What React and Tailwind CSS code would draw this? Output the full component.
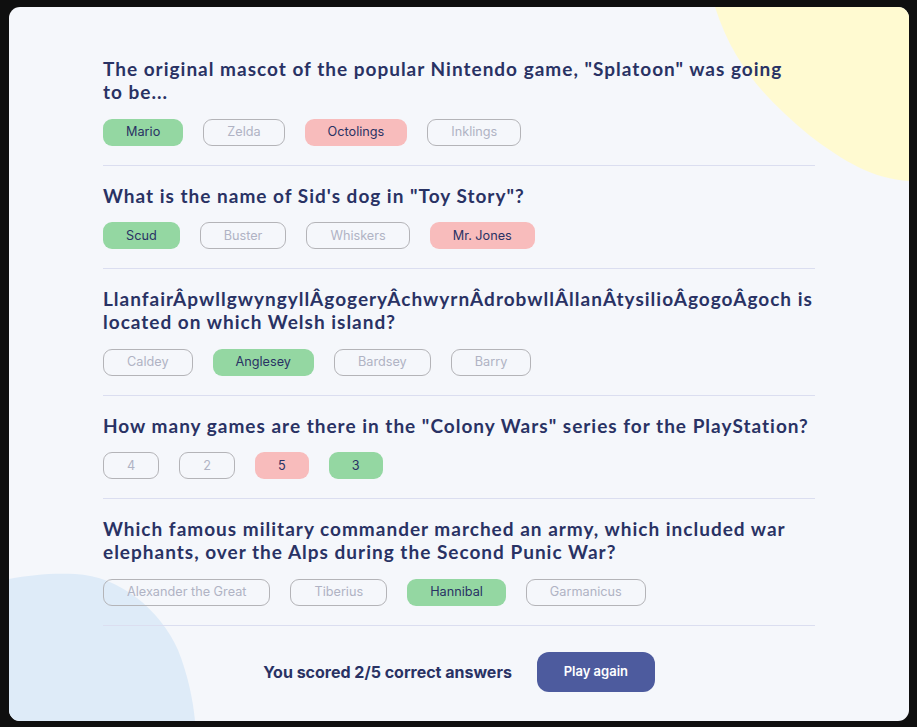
const questions = [
  {
    q: ['The original mascot of the popular Nintendo game, "Splatoon" was going', "to be..."],
    answers: [
      { text: "Mario", state: "correct" },
      { text: "Zelda" },
      { text: "Octolings", state: "wrong" },
      { text: "Inklings" },
    ],
  },
  {
    q: ['What is the name of Sid\'s dog in "Toy Story"?'],
    answers: [
      { text: "Scud", state: "correct" },
      { text: "Buster" },
      { text: "Whiskers" },
      { text: "Mr. Jones", state: "wrong" },
    ],
  },
  {
    q: ["LlanfairÂpwllgwyngyllÂgogeryÂchwyrnÂdrobwllÂllanÂtysilioÂgogoÂgoch is", "located on which Welsh island?"],
    answers: [
      { text: "Caldey" },
      { text: "Anglesey", state: "correct" },
      { text: "Bardsey" },
      { text: "Barry" },
    ],
  },
  {
    q: ['How many games are there in the "Colony Wars" series for the PlayStation?'],
    answers: [
      { text: "4" },
      { text: "2" },
      { text: "5", state: "wrong" },
      { text: "3", state: "correct" },
    ],
  },
  {
    q: [
      "Which famous military commander marched an army, which included war",
      "elephants, over the Alps during the Second Punic War?",
    ],
    answers: [
      { text: "Alexander the Great" },
      { text: "Tiberius" },
      { text: "Hannibal", state: "correct" },
      { text: "Garmanicus" },
    ],
  },
];

function Answer({ text, state }) {
  // picked/right answers are filled with no border, the rest are outlined
  const cls =
    state === "correct"
      ? "bg-[#94d7a2] text-[#293264]"
      : state === "wrong"
      ? "bg-[#f8bcbc] text-[#293264]"
      : "border border-[#b4b4b8] text-[#b0b3c4]";
  return (
    <div className={`h-[27px] px-[23px] flex items-center rounded-[9px] text-[12.7px] ${cls}`}>
      {text}
    </div>
  );
}

export default function App() {
  return (
    <div className="h-screen bg-[#0f0f0f] pt-[7px] pl-[9px] pr-[8px] pb-[6px]">
      <div className="relative h-full overflow-hidden rounded-[11px] bg-[#f5f7fb]">
        <svg className="absolute inset-0 w-full h-full" viewBox="0 0 900 714" preserveAspectRatio="none">
          <path d="M706 0 C725 60 760 95 800 128 C835 155 865 172 900 174 L900 0 Z" fill="#fffad1" />
          <path d="M0 572 C21 568 41 566 66 567 C111 569 151 603 169 643 C179 668 184 693 186 714 L0 714 Z" fill="#deebf8" />
        </svg>

        <div className="relative mx-auto w-[712px] pt-[50px]" style={{ fontFamily: "Inter, sans-serif" }}>
          {questions.map((item, i) => (
            <div key={i} className={`border-b border-[#dbdef0] pb-[19px] ${i > 0 ? "pt-[18px]" : ""}`}>
              <h2
                className="text-[19px] leading-[23px] font-bold tracking-[1px] text-[#293264]"
                style={{ fontFamily: "Lato, sans-serif" }}
              >
                {item.q.map((line, j) => (
                  <span key={j} className="block">
                    {line}
                  </span>
                ))}
              </h2>
              <div className="mt-[15.5px] flex gap-[20px]">
                {item.answers.map((a) => (
                  <Answer key={a.text} {...a} />
                ))}
              </div>
            </div>
          ))}

          <div className="pt-[26px] flex items-center justify-center gap-[25px]">
            <div className="text-[16px] font-bold text-[#293264]">You scored 2/5 correct answers</div>
            <button className="h-[40px] w-[118px] rounded-[12px] bg-[#4d5b9e] text-white text-[13px] font-semibold">
              Play again
            </button>
          </div>
        </div>
      </div>
    </div>
  );
}
